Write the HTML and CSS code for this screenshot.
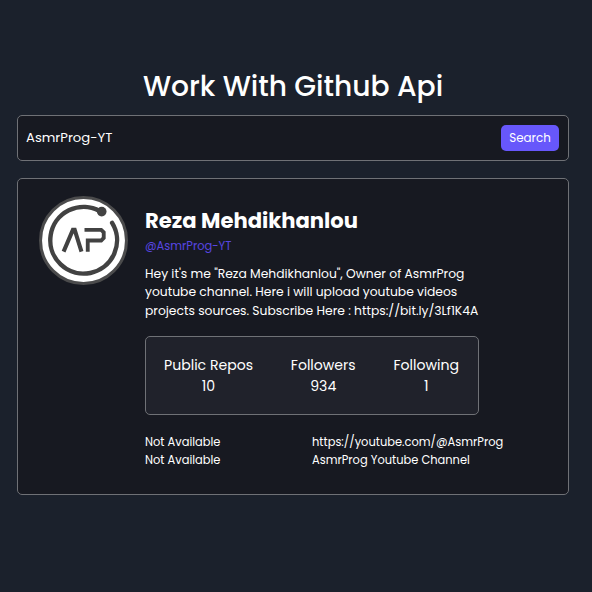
FILE: index.html
```html
<!DOCTYPE html>
<html lang="en">
<head>
<meta charset="utf-8">
<title>Work With Github Api</title>
<link rel="stylesheet" href="styles.css">
</head>
<body>
<main class="container">
  <h1 class="title">Work With Github Api</h1>
  <form class="search">
    <span class="query">AsmrProg-YT</span>
    <button class="search-btn" type="button">Search</button>
  </form>
  <section class="card">
    <svg class="avatar" viewBox="0 0 88 88" fill="none" stroke="#424242">
      <circle cx="44" cy="44" r="42.500" fill="#fff" stroke="#4b4b4c" stroke-width="3"/>
      <path d="M60 14.800A33 33 0 1 0 72.300 26.500" stroke-width="4.400" stroke-linecap="round"/>
      <circle cx="62" cy="15.400" r="4.800" fill="#424242" stroke="none"/>
      <path d="M24.300 55L33.500 33.500H35.300L42 55" stroke-width="4"/>
      <path d="M45 33.500H61.500L64 36V41.500L61.500 44H48.200V55" stroke-width="3.800"/>
    </svg>
    <div class="profile">
      <h2 class="name">Reza Mehdikhanlou</h2>
      <p class="handle">@AsmrProg-YT</p>
      <p class="bio">Hey it's me "Reza Mehdikhanlou", Owner of AsmrProg youtube channel. Here i will upload youtube videos projects sources. Subscribe Here : https://bit.ly/3Lf1K4A</p>
      <div class="stats">
        <div class="stat"><span>Public Repos</span><span>10</span></div>
        <div class="stat"><span>Followers</span><span>934</span></div>
        <div class="stat"><span>Following</span><span>1</span></div>
      </div>
      <div class="links">
        <span>Not Available</span><span>https://youtube.com/@AsmrProg</span>
        <span>Not Available</span><span>AsmrProg Youtube Channel</span>
      </div>
    </div>
  </section>
</main>
</body>
</html>
```
FILE: styles.css
```css
* { box-sizing: border-box; margin: 0; padding: 0; }
body {
  height: 592px;
  overflow: hidden;
  background: #1b212c;
  color: #fff;
  font-family: Poppins, Inter, sans-serif;
}
.container { width: 552px; margin: 0 0 0 17px; padding-top: 65px; }
.title { height: 42px; line-height: 42px; font-size: 28.160px; font-weight: 500; text-align: center; margin-bottom: 8px; }
.search {
  display: flex; align-items: center; justify-content: space-between;
  height: 46px; padding: 0 9px 0 8px; margin-bottom: 17px;
  background: #171921; border: 1px solid #6f7176; border-radius: 5px;
}
.query { font-size: 13.200px; }
.search-btn {
  width: 58px; height: 26px; border: 0; border-radius: 5px;
  background: #6757fb; color: #fff; font: 400 11.900px/26px Poppins, Inter, sans-serif;
}
.card {
  display: flex; gap: 17px; height: 317px; padding: 17px 21px;
  background: #171921; border: 1px solid #6f7176; border-radius: 5px;
}
.avatar { flex: none; width: 89px; height: 89px; }
.profile { width: 360px; padding-top: 9px; }
.name { height: 32px; font-size: 21.120px; line-height: 32px; font-weight: 700; white-space: nowrap; }
.handle { height: 18px; font-size: 11.440px; line-height: 19px; color: #5746e2; }
.bio { width: 336px; padding-top: 10px; font-size: 12.320px; line-height: 18.300px; }
.stats {
  display: flex; justify-content: space-between;
  width: 334px; height: 79px; margin-top: 16px; padding: 18px 19px 18px 18px;
  background: #20222b; border: 1px solid #6f7176; border-radius: 5px;
}
.stat { display: flex; flex-direction: column; align-items: center; font-size: 14.080px; line-height: 21px; }
.links {
  display: grid; grid-template-columns: 167px 1fr;
  margin-top: 18px; font-size: 11.440px; line-height: 18px; white-space: nowrap;
}
```
